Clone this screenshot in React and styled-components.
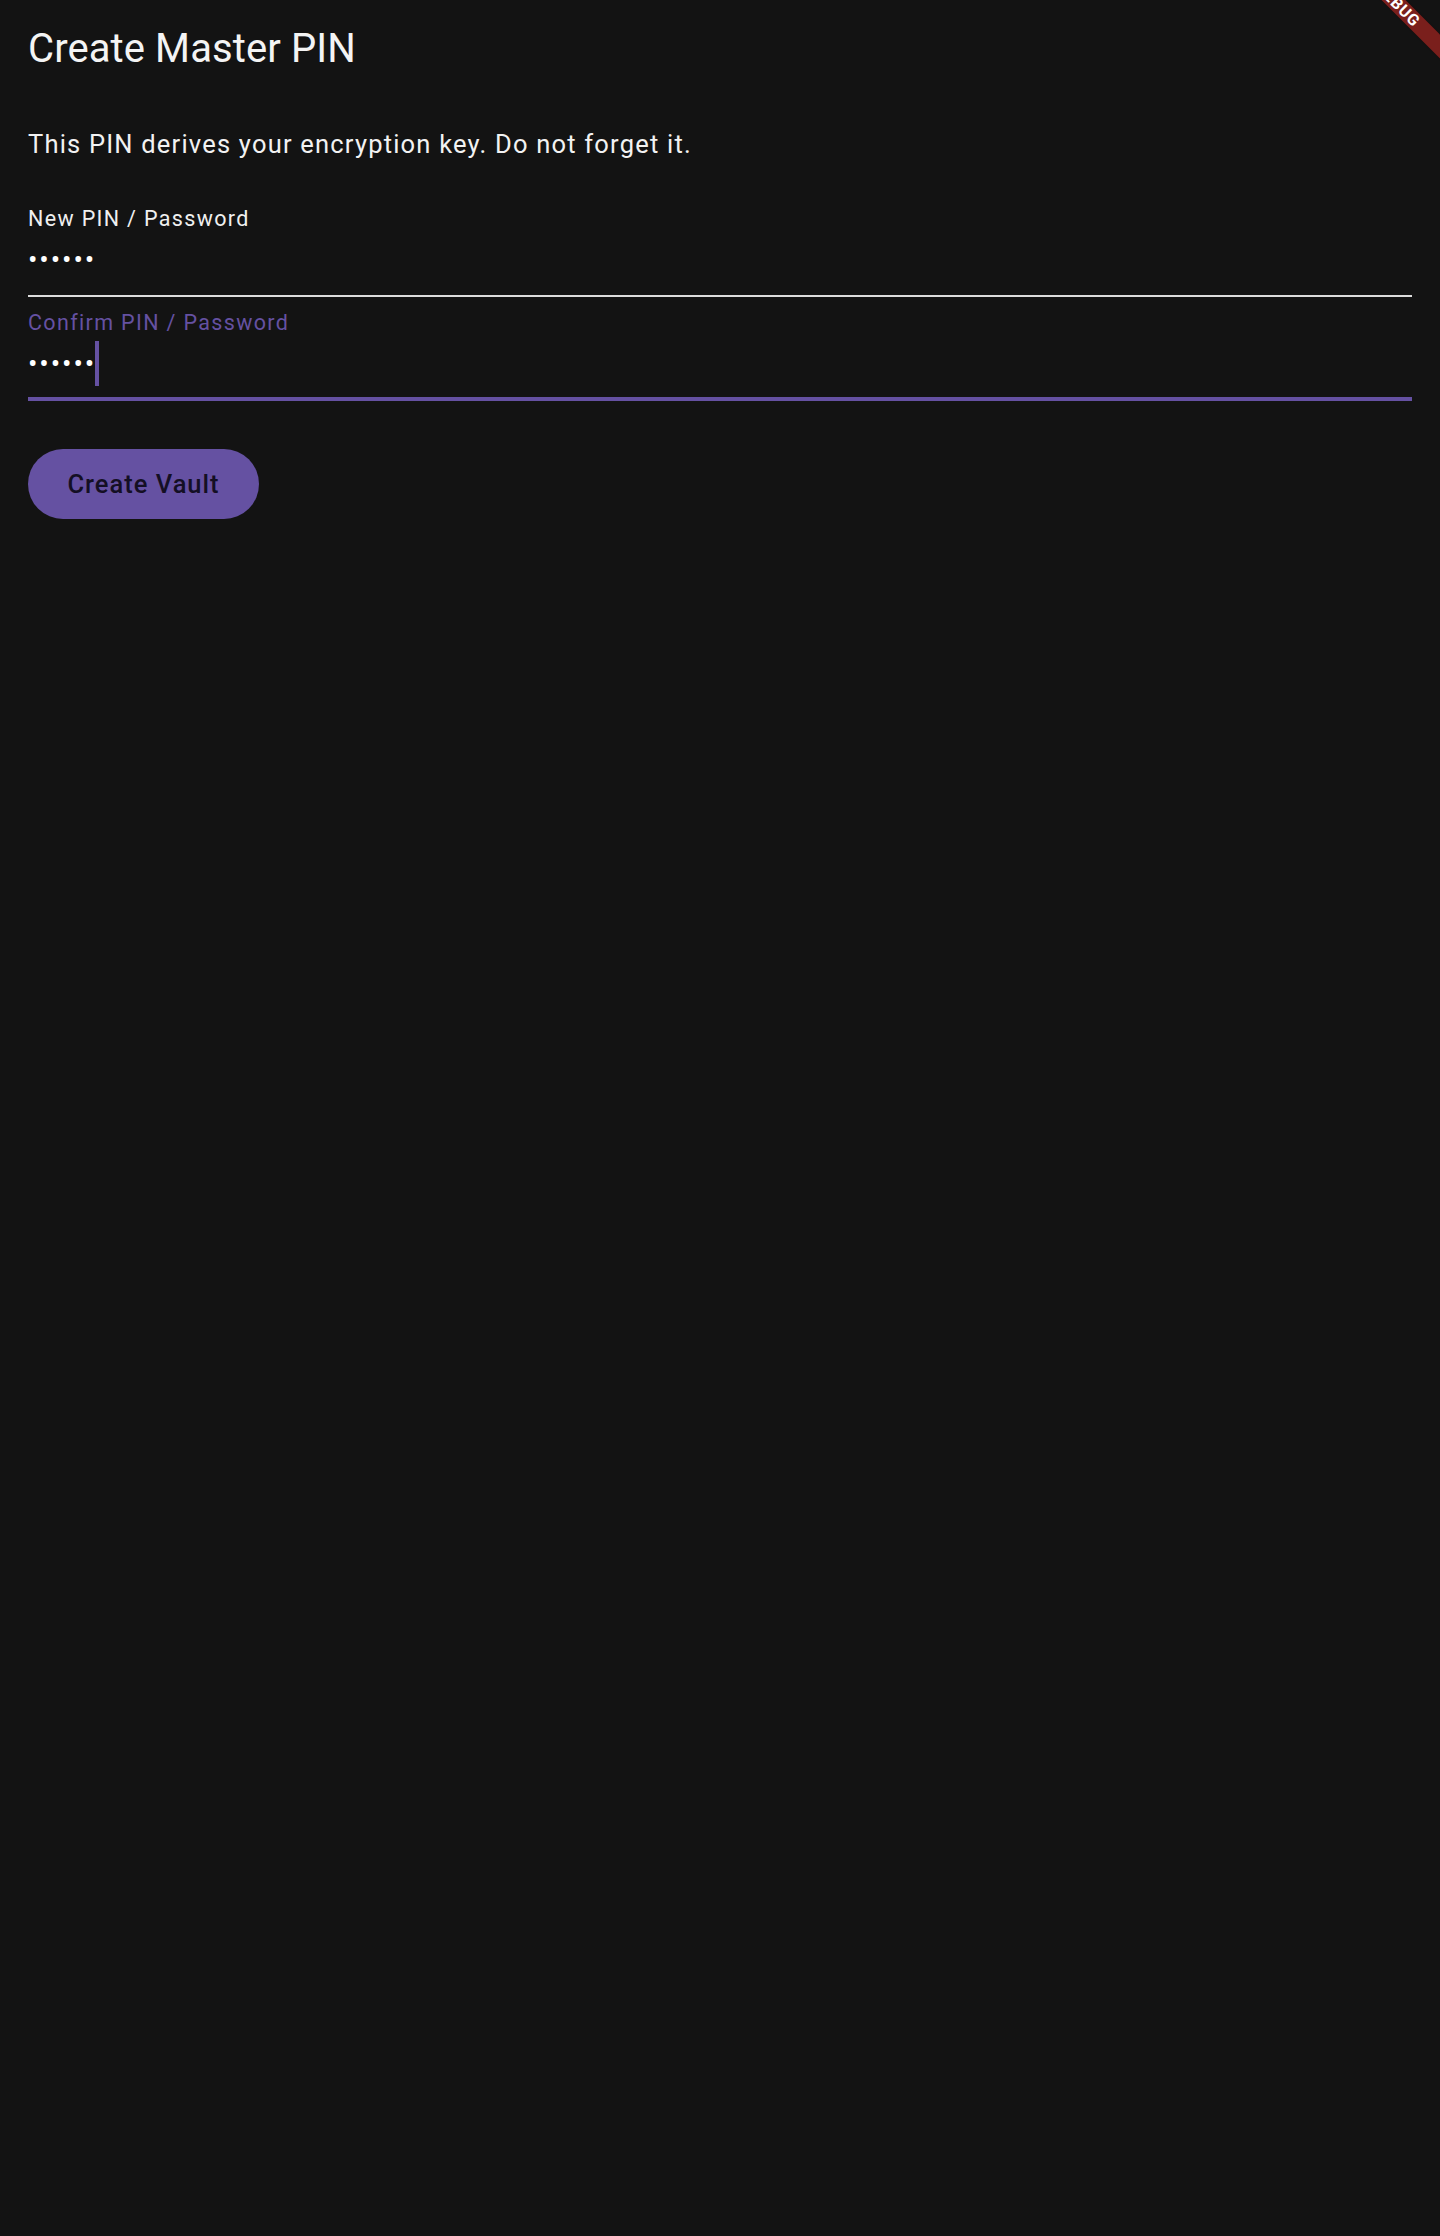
import React from "react";
import styled, { createGlobalStyle } from "styled-components";

const GlobalStyle = createGlobalStyle`
  html, body {
    margin: 0;
    padding: 0;
    background: #131313;
  }
  body {
    font-family: Roboto, "Noto Sans", "Liberation Sans", sans-serif;
    -webkit-font-smoothing: antialiased;
  }
`;

const PURPLE = "#6551a2";

const Screen = styled.div`
  position: relative;
  width: 100%;
  min-height: 100vh;
  background: #131313;
  overflow: hidden;
  color: #f2f2f2;
`;

const AppBar = styled.header`
  height: 98px;
  display: flex;
  align-items: center;
  padding: 0 28px 2px;
  box-sizing: border-box;
`;

const Title = styled.h1`
  margin: 0;
  font-size: 40px;
  font-weight: 400;
  line-height: normal;
  letter-spacing: 0.1px;
  color: #f4f4f4;
`;

const Body = styled.main`
  display: flex;
  flex-direction: column;
  align-items: stretch;
  padding: 29px 28px 28px;
`;

const Description = styled.p`
  margin: 0;
  font-size: 25.5px;
  line-height: 35px;
  letter-spacing: 1.2px;
  color: #f2f2f2;
`;

const Field = styled.div`
  position: relative;
  height: 92px;
  margin-top: ${(p) => p.$gap}px;
  display: flex;
  flex-direction: column;
  &::after {
    content: "";
    position: absolute;
    left: 0;
    right: 0;
    bottom: 0;
    height: ${(p) => (p.$focused ? 4 : 2)}px;
    background: ${(p) => (p.$focused ? PURPLE : "#dcdcdc")};
  }
`;

const Label = styled.label`
  font-size: 21.5px;
  line-height: 28px;
  letter-spacing: 1.35px;
  color: ${(p) => (p.$focused ? PURPLE : "#f0f0f0")};
`;

const InputRow = styled.div`
  display: flex;
  align-items: center;
  padding-top: 4px;
  height: 45px;
`;

const Dots = styled.span`
  font-size: 28px;
  line-height: 45px;
  letter-spacing: 1.9px;
  color: #ffffff;
`;

const Caret = styled.span`
  display: block;
  width: 4px;
  height: 45px;
  margin-left: -1px;
  background: ${PURPLE};
`;

const PrimaryButton = styled.button`
  align-self: flex-start;
  margin-top: 48px;
  height: 70px;
  width: 231px;
  padding: 0;
  border: none;
  border-radius: 35px;
  background: ${PURPLE};
  color: #140f24;
  font-family: Roboto, "Noto Sans", sans-serif;
  font-size: 25.5px;
  font-weight: 500;
  letter-spacing: 1px;
  cursor: pointer;
`;

const DebugBanner = styled.div`
  position: absolute;
  top: -4px;
  right: -38px;
  width: 160px;
  height: 17px;
  transform: rotate(45deg);
  background: #7a1f1c;
  color: #ffffff;
  font-family: Roboto, "Liberation Sans", sans-serif;
  font-weight: 700;
  font-size: 16px;
  line-height: 17px;
  letter-spacing: 0.8px;
  text-align: center;
  box-shadow: 0 0 2px rgba(0, 0, 0, 0.3);
`;

function PinField({ label, focused, gap }) {
  return (
    <Field $focused={focused} $gap={gap}>
      <Label $focused={focused}>{label}</Label>
      <InputRow>
        <Dots>••••••</Dots>
        {focused && <Caret />}
      </InputRow>
    </Field>
  );
}

export default function App() {
  return (
    <>
      <GlobalStyle />
      <Screen>
        <AppBar>
          <Title>Create Master PIN</Title>
        </AppBar>
        <Body>
          <Description>This PIN derives your encryption key. Do not forget it.</Description>
          <PinField label="New PIN / Password" gap={43} />
          <PinField label="Confirm PIN / Password" focused gap={12} />
          <PrimaryButton>Create Vault</PrimaryButton>
        </Body>
        <DebugBanner>DEBUG</DebugBanner>
      </Screen>
    </>
  );
}
